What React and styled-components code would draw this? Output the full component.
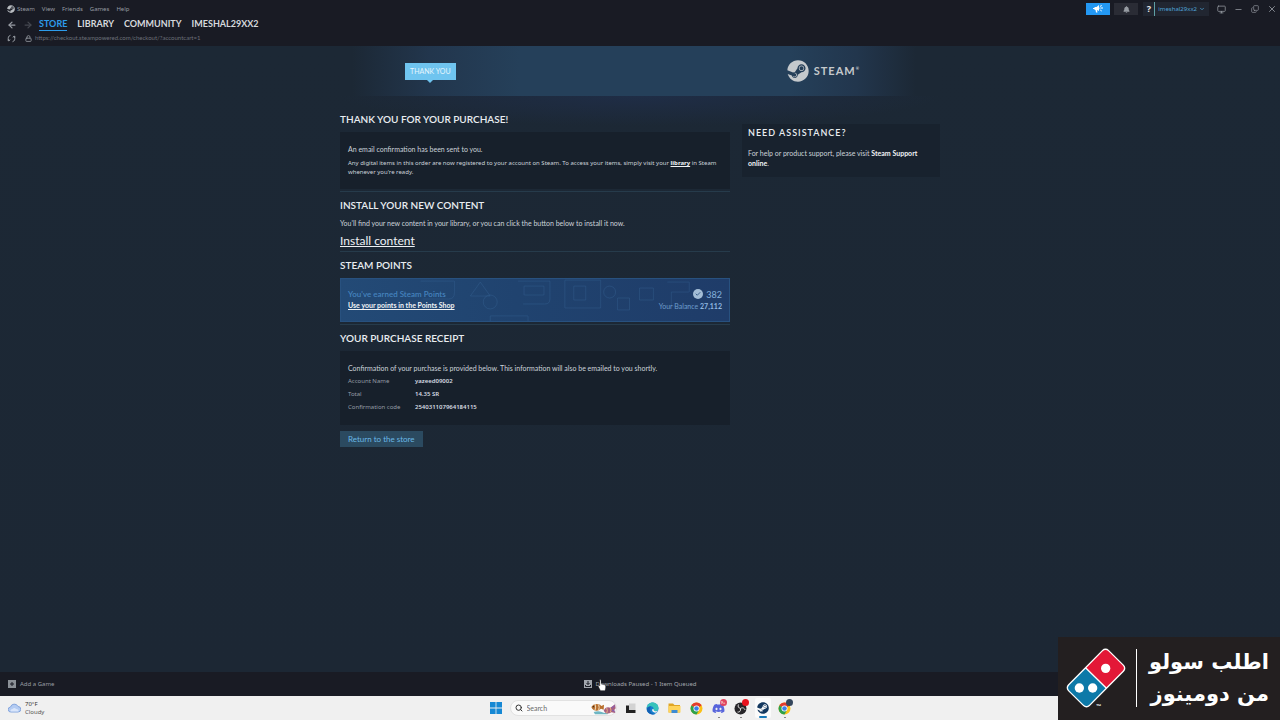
import React from "react";
import styled, { createGlobalStyle } from "styled-components";
import {
  ArrowLeft, ArrowRight, Lock, ChevronDown, Monitor, Minus, Copy, X, Search, Check,
} from "lucide-react";
import { FaSteam, FaDiscord, FaBell } from "react-icons/fa";

const compact = `"Noto Sans", "Open Sans", sans-serif`;

const Global = createGlobalStyle`
  * { box-sizing: border-box; }
  body { margin: 0; background: #1c2734; }
  button, input { font: inherit; }
  a { color: inherit; text-decoration: none; }
  h1, h2, p { margin: 0; }
`;

const Shell = styled.div`
  min-height: 100vh;
  display: flex;
  flex-direction: column;
  font-family: Lato, "Noto Sans", sans-serif;
  font-size: 7px;
  line-height: 10px;
  color: #ccd3da;
`;

const TopBar = styled.header`
  background: #191b24;
  padding: 0 3px 0 7px;
  height: 46px;
`;

const Bar = styled.div`
  display: flex;
  align-items: center;
  gap: ${(p) => p.$gap || 8}px;
  height: ${(p) => p.$h || 14}px;
`;

const PlainButton = styled.button`
  display: inline-flex;
  align-items: center;
  justify-content: center;
  gap: 2px;
  padding: 0;
  border: 0;
  background: none;
  color: ${(p) => p.$color || "#979ca3"};
  font-family: ${compact};
  font-size: 6px;
  cursor: pointer;
`;

const MenuNav = styled.nav`
  display: flex;
  align-items: center;
  gap: 7px;
  flex: 1;
`;

const ChipButton = styled(PlainButton)`
  width: 24px;
  height: 12px;
  background: ${(p) => p.$bg};
`;

const Account = styled.div`
  display: flex;
  align-items: center;
  height: 14px;
  margin: 0 4px 0 1px;
  background: #212631;
`;

const HelpButton = styled(PlainButton)`
  width: 12px;
  height: 14px;
  font-size: 9px;
  font-weight: 700;
  border-right: 1px solid #5f9fa5;
`;

const AccountButton = styled(PlainButton)`
  padding: 0 4px 0 3px;
`;

const WindowControls = styled.div`
  display: flex;
  align-items: center;
  gap: 8px;
`;

const NavLinks = styled.nav`
  display: flex;
  gap: 10px;
`;

const NavLink = styled.a`
  font-size: 9px;
  line-height: 12px;
  font-weight: 700;
  color: ${(p) => (p.$active ? "#2d9ceb" : "#d6d9dd")};
  border-bottom: 1px solid ${(p) => (p.$active ? "#2d9ceb" : "transparent")};
`;

const Address = styled.span`
  color: #6b7078;
  font-size: 6px;
`;

const Content = styled.div`
  flex: 1;
  background: linear-gradient(#1c2835, #1c2734);
`;

const Banner = styled.div`
  height: 50px;
  max-width: 600px;
  margin: 0 auto;
  display: flex;
  align-items: center;
  justify-content: space-between;
  padding: 0 81px 0 65px;
  background: linear-gradient(90deg, #1c2835 2%, #22364d 15%, #25405a 30%, #25405a 75%, #22364d 86%, #1c2835 96%);
`;

const StepTag = styled.h1`
  position: relative;
  padding: 3px 5px 4px;
  font-size: 7px;
  line-height: 10px;
  font-weight: 400;
  color: #e6f5fd;
  background: #6fc4ef;
  &::after {
    content: "";
    position: absolute;
    left: 50%;
    top: 100%;
    margin-left: -3px;
    border: 3px solid transparent;
    border-top-color: #6fc4ef;
    border-bottom: 0;
  }
`;

const Logo = styled.div`
  display: flex;
  align-items: center;
  gap: 5px;
  color: #c5c9cc;
  font-size: 11px;
  line-height: 16px;
  font-weight: 700;
  letter-spacing: 1px;
  sup { font-size: 4px; line-height: 4px; letter-spacing: 0; }
`;

const Columns = styled.div`
  max-width: 600px;
  margin: 0 auto;
  display: grid;
  grid-template-columns: minmax(0, 65fr) minmax(0, 33fr);
  column-gap: 12px;
  align-items: start;
  background: radial-gradient(300px 30px at 50% 0, #1f2d46, #1f2d4600);
`;

const Main = styled.main`
  display: flex;
  flex-direction: column;
  gap: 6px;
  padding: 16px 0 24px;
`;

const Section = styled.section`
  padding-bottom: ${(p) => (p.$last ? 0 : 2)}px;
  border-bottom: ${(p) => (p.$last ? "0" : "1px solid #263b4b")};
`;

const Heading = styled.h2`
  font-size: 10px;
  line-height: 14px;
  font-weight: 600;
  color: #e9edf1;
  margin-bottom: 6px;
`;

const Panel = styled.div`
  background: #17202b;
  padding: 12px 8px;
`;

const Note = styled.p`
  font-family: ${compact};
  font-size: 6px;
  line-height: 9px;
  margin-top: 5px;
`;

const InlineLink = styled.a`
  font-weight: 700;
  color: #f0f3f5;
  text-decoration: ${(p) => (p.$plain ? "none" : "underline")};
`;

const InstallLink = styled.a`
  display: inline-block;
  margin-top: 5px;
  font-size: 12px;
  line-height: 16px;
  color: #edf1f4;
  text-decoration: underline;
  vertical-align: top;
`;

const PointsCard = styled.div`
  position: relative;
  display: flex;
  justify-content: space-between;
  align-items: center;
  height: 44px;
  padding: 0 7px 1px;
  border: 1px solid #28517f;
  background: linear-gradient(90deg, #234a76, #20436f 45%, #1f3c69);
  color: #6c9bca;
  overflow: hidden;
`;

const Pattern = styled.svg`
  position: absolute;
  inset: 0;
  width: 100%;
  height: 100%;
`;

const PointsSide = styled.div`
  position: relative;
  display: flex;
  flex-direction: column;
  align-items: ${(p) => (p.$end ? "flex-end" : "flex-start")};
  gap: 1px;
  b { color: #8fb8e0; }
`;

const Earned = styled.p`
  font-size: 8px;
  line-height: 10px;
  font-weight: 600;
  color: #4583be;
`;

const Amount = styled.p`
  display: flex;
  align-items: center;
  gap: 3px;
  font-size: 9px;
  line-height: 11px;
  color: #85b1dc;
`;

const Coin = styled.span`
  display: grid;
  place-items: center;
  width: 10px;
  height: 10px;
  border-radius: 50%;
  background: #a3bdd6;
  color: #3d628c;
`;

const Receipt = styled.table`
  border-collapse: collapse;
  margin-top: 1px;
  font-family: ${compact};
  font-size: 6px;
  th, td { height: 13px; padding: 0; text-align: left; line-height: 10px; }
  th { width: 67px; font-weight: 400; color: #959da7; }
  td { color: #d6dce2; font-weight: 600; }
`;

const StoreButton = styled.button`
  align-self: flex-start;
  height: 16px;
  padding: 0 8px;
  border: 0;
  background: #2b4a60;
  color: #6ab9e6;
  font-size: 8px;
  line-height: 10px;
  cursor: pointer;
`;

const Aside = styled.aside`
  margin-top: 28px;
  padding: 2px 6px 9px;
  background: #18222e;
  ${Heading} {
    margin-bottom: 8px;
    font-size: 9px;
    letter-spacing: 1px;
  }
`;

const StatusBar = styled.footer`
  display: grid;
  grid-template-columns: 1fr auto 1fr;
  align-items: center;
  height: 24px;
  padding: 0 8px 1px;
  background: #191b24;
`;

const StatusButton = styled(PlainButton)`
  gap: 4px;
  justify-self: start;
`;

const Taskbar = styled.nav`
  display: grid;
  grid-template-columns: 1fr auto 1fr;
  align-items: center;
  height: 24px;
  padding: 0 8px;
  background: #f0f0f0;
`;

const Weather = styled.div`
  display: flex;
  align-items: center;
  gap: 4px;
  color: #555;
  font-family: ${compact};
  font-size: 6px;
  line-height: 8px;
  p:first-child { color: #333; }
`;

const Apps = styled.div`
  display: flex;
  align-items: center;
  gap: 6px;
`;

const SearchBox = styled.label`
  display: flex;
  align-items: center;
  gap: 4px;
  width: 107px;
  height: 16px;
  padding: 0 0 0 4px;
  border: 1px solid #e2e2e2;
  border-radius: 8px;
  background: #fafafa;
  color: #333;
  input {
    flex: 1;
    min-width: 0;
    padding: 0;
    border: 0;
    outline: 0;
    background: none;
    font-size: 7px;
  }
  input::placeholder { color: #6a6a6a; opacity: 1; }
`;

const AppButton = styled.button`
  position: relative;
  display: grid;
  place-items: center;
  width: 16px;
  height: 20px;
  padding: 0;
  border: 0;
  border-radius: 2px;
  background: ${(p) => (p.$active ? "#fbfbfb" : "none")};
  &::after {
    content: "";
    position: absolute;
    bottom: 0;
    width: ${(p) => (p.$active ? 8 : 2)}px;
    height: ${(p) => (p.$active ? 2 : p.$open ? 1 : 0)}px;
    border-radius: 1px;
    background: ${(p) => (p.$active ? "#1778b8" : "#777")};
  }
`;

const Badge = styled.span`
  position: absolute;
  top: 1px;
  right: 0;
  width: 7px;
  height: 7px;
  border-radius: 50%;
  background: ${(p) => p.$bg};
  color: #fff;
  font-size: 4px;
  line-height: 7px;
`;

const Ad = styled.aside`
  position: fixed;
  right: 0;
  bottom: 0;
  display: flex;
  align-items: center;
  height: 83px;
  width: 222px;
  padding: 0 11px 2px 8px;
  background: #231f20;
  color: #fff;
  svg { flex: none; }
`;

const Divider = styled.span`
  width: 1px;
  height: 58px;
  margin-left: 10px;
  background: #fff;
`;

const AdText = styled.p`
  flex: 1;
  direction: rtl;
  font-family: "DejaVu Sans", sans-serif;
  font-weight: 700;
  font-size: 21px;
  line-height: 32px;
  white-space: nowrap;
`;

const Pointer = styled.svg`
  position: fixed;
  left: calc(50% - 42px);
  bottom: 29px;
`;

const Refresh = () => (
  <svg width="9" height="9" viewBox="0 0 18 18" fill="none" stroke="currentColor" strokeWidth="2">
    <path d="M7 2.500C3 3.500 1 8 3.500 13M1 12l3 2 2-3M11 15.500c4-1 6-5.500 3.500-10.500M17 6l-3-2-2 3" />
  </svg>
);

const Horn = () => (
  <svg width="10" height="8" viewBox="0 0 20 16" fill="currentColor">
    <path d="M12 0v12L8 10l1 5H6L5 10H3V8H0V6h3V4h4ZM13 4q3 2 0 5ZM15 5h5v2h-5ZM14 2l3-2 1 1-3 3ZM14 10l3 3 1-1-3-3Z" />
  </svg>
);

const Chrome = () => (
  <svg width="13" height="13" viewBox="0 0 24 24">
    <circle cx="12" cy="12" r="11" fill="#fbc116" />
    <path d="M12 12 2.500 6.500A11 11 0 0 1 21.500 6.500Z" fill="#e33b2e" />
    <path d="M12 12 2.500 6.500A11 11 0 0 0 12 23l4-7Z" fill="#2da14c" />
    <circle cx="12" cy="12" r="5.500" fill="#fff" />
    <circle cx="12" cy="12" r="4.200" fill="#3b7fe8" />
  </svg>
);

const Edge = () => (
  <svg width="13" height="13" viewBox="0 0 24 24">
    <circle cx="12" cy="12" r="11" fill="#1680cf" />
    <path d="M1 12C2 5 6 1 12 1c7 0 11 5 11 10 0 4-3 6-6 6-4 0-3-2-3-4 0-3-2-5-5-5-4 0-7 2-8 4Z" fill="#38c3bb" />
    <path d="M8 12c-2 6 3 10 9 10-7 3-15-1-15.500-8C2 10 6 8 9 8c-1 1-1 2-1 4Z" fill="#1260b4" />
    <path d="M14 13c0 3 2 4.500 5 4l3-1.500-2 3.500c-5 2-9-1-9-5Z" fill="#f0f0f0" />
  </svg>
);

const Folder = () => (
  <svg width="13" height="12" viewBox="0 0 26 24">
    <path d="M1 3h9l3 3h11v15H1Z" fill="#dfa525" />
    <path d="M1 8h24v13H1Z" fill="#ffd45b" />
    <path d="M7 16h12v6H7Z" fill="#3c8bd4" />
  </svg>
);

const Windows = () => (
  <svg width="12" height="12" viewBox="0 0 12 12" fill="#1688d4">
    <path d="M0 0h5.600v5.600H0ZM6.400 0H12v5.600H6.400ZM0 6.400h5.600V12H0ZM6.400 6.400H12V12H6.400Z" />
  </svg>
);

const TaskView = () => (
  <svg width="11" height="11" viewBox="0 0 22 22">
    <path d="M8 1h13v14H8Z" fill="#d2d2d2" />
    <path d="M2 5h6v9h13v6H2Z" fill="#222" />
  </svg>
);

const Obs = () => (
  <svg width="13" height="13" viewBox="0 0 26 26">
    <circle cx="13" cy="13" r="12" fill="#262529" />
    <g fill="none" stroke="#d8d8d8" strokeWidth="2">
      <path d="M13 13c-4-1-6-4-4-8M13 13c4-3 8-1 9 3M13 13c1 5-2 8-6 7" />
    </g>
  </svg>
);

const Fishes = () => (
  <svg width="25" height="13" viewBox="0 0 75 39">
    <path d="M8 30q14-5 24 0t18 2v5H12Z" fill="#6eb6c3" />
    <path d="M1 15Q8 3 22 7q6 1 9 5l8-4-1 15-8-3Q20 30 8 24 3 21 1 15Z" fill="#b9702f" />
    <path d="M12 6q4 9 0 19M23 8q3 8 0 17" stroke="#f3e0c0" strokeWidth="3" fill="none" />
    <circle cx="7" cy="14" r="2" fill="#222" />
    <path d="M38 26Q44 12 58 17l14-10 2 12-4 5 3 9-12-2Q46 40 38 26Z" fill="#a8607f" />
    <path d="M47 18q4 8 0 16M58 17q4 8 0 14" stroke="#eab27c" strokeWidth="3" fill="none" />
    <path d="M62 18l9-7M63 24l8 4" stroke="#7e5fc0" strokeWidth="3" />
  </svg>
);

const Cloud = () => (
  <svg width="13" height="10" viewBox="0 0 26 20">
    <path d="M6 18a5 5 0 0 1-1-10A8 8 0 0 1 20 7a5.500 5.500 0 0 1 0 11Z" fill="#b3cbf2" stroke="#84a5dd" strokeWidth="2" />
    <path d="M5 17a4 4 0 0 1 4-5q4-4 7 0 6 0 5 5Z" fill="#dae6fb" />
  </svg>
);

const Domino = () => (
  <svg width="60" height="60" viewBox="50 55 180 180" aria-label="Domino's">
    <g transform="translate(140 145) rotate(-45.300)">
      <rect x="-87" y="-46" width="174" height="92" rx="14" fill="#fff" />
      <path d="M-2-42V42H-71Q-83 42-83 30V-30Q-83-42-71-42Z" fill="#0d79a8" />
      <path d="M2-42V42H71Q83 42 83 30V-30Q83-42 71-42Z" fill="#e31837" />
    </g>
    <circle cx="169" cy="116" r="14" fill="#fff" />
    <circle cx="90" cy="175" r="14" fill="#fff" />
    <circle cx="130" cy="175" r="14" fill="#fff" />
    <text x="148" y="234" fontSize="16" fontWeight="700" fontFamily="Liberation Sans" fill="#fff" textAnchor="middle">™</text>
  </svg>
);

const receiptRows = [
  ["Account Name", "yazeed09002"],
  ["Total", "14.35 SR"],
  ["Confirmation code", "254031107964184115"],
];

export default function App() {
  return (
    <>
      <Global />
      <Shell>
        <TopBar>
          <Bar $h={18}>
            <MenuNav aria-label="Application">
              <PlainButton><FaSteam size={8} color="#b8bcc0" />Steam</PlainButton>
              {["View", "Friends", "Games", "Help"].map((m) => <PlainButton key={m}>{m}</PlainButton>)}
            </MenuNav>
            <Bar $gap={4}>
              <ChipButton $bg="#2398f3" $color="#fff" aria-label="What's new"><Horn /></ChipButton>
              <ChipButton $bg="#2a2c35" aria-label="Notifications"><FaBell size={7} /></ChipButton>
              <Account>
                <HelpButton $color="#e8e8e8" aria-label="Help">?</HelpButton>
                <AccountButton $color="#4fa3d8">imeshal29xx2<ChevronDown size={6} strokeWidth={3} /></AccountButton>
              </Account>
              <WindowControls>
                <PlainButton aria-label="Big Picture"><Monitor size={9} /></PlainButton>
                <PlainButton aria-label="Minimize"><Minus size={9} /></PlainButton>
                <PlainButton aria-label="Restore"><Copy size={8} style={{ transform: "scaleY(-1)" }} /></PlainButton>
                <PlainButton aria-label="Close"><X size={10} /></PlainButton>
              </WindowControls>
            </Bar>
          </Bar>
          <Bar $gap={6} $h={13}>
            <PlainButton aria-label="Back"><ArrowLeft size={10} strokeWidth={3} /></PlainButton>
            <PlainButton $color="#454850" aria-label="Forward"><ArrowRight size={10} strokeWidth={3} /></PlainButton>
            <NavLinks>
              <NavLink href="#store" $active>STORE</NavLink>
              <NavLink href="#library">LIBRARY</NavLink>
              <NavLink href="#community">COMMUNITY</NavLink>
              <NavLink href="#profile">IMESHAL29XX2</NavLink>
            </NavLinks>
          </Bar>
          <Bar $gap={9}>
            <PlainButton aria-label="Reload"><Refresh /></PlainButton>
            <Bar $gap={3}>
              <Lock size={7} color="#8b9097" strokeWidth={3} />
              <Address>https://checkout.steampowered.com/checkout/?accountcart=1</Address>
            </Bar>
          </Bar>
        </TopBar>

        <Content>
          <Banner>
            <StepTag>THANK YOU</StepTag>
            <Logo><FaSteam size={22} /><span>STEAM<sup>®</sup></span></Logo>
          </Banner>
          <Columns>
            <Main>
              <Section>
                <Heading>THANK YOU FOR YOUR PURCHASE!</Heading>
                <Panel>
                  <p>An email confirmation has been sent to you.</p>
                  <Note>
                    Any digital items in this order are now registered to your account on Steam. To access your items, simply visit your <InlineLink href="#library">library</InlineLink> in Steam whenever you're ready.
                  </Note>
                </Panel>
              </Section>
              <Section>
                <Heading>INSTALL YOUR NEW CONTENT</Heading>
                <p>You'll find your new content in your library, or you can click the button below to install it now.</p>
                <InstallLink href="#install">Install content</InstallLink>
              </Section>
              <Section>
                <Heading>STEAM POINTS</Heading>
                <PointsCard>
                  <Pattern viewBox="0 0 390 44" preserveAspectRatio="xMidYMid slice" fill="none" stroke="#3a679a" strokeOpacity="0.35" aria-hidden="true">
                    <path d="M80 3h34v12q0 6-6 6H82M140 4l10 14h-20ZM178 3h32v18q0 5-5 5h-22M184 8h20v9h-20ZM225 2h36v28h-36ZM234 8h12v14h-12ZM150 44v-6h38v6M278 32v-12h12v12ZM300 10h14v12h-14ZM328 4h22v10h-18v14h20" />
                    <circle cx="150" cy="24" r="7" /><circle cx="270" cy="14" r="6" />
                  </Pattern>
                  <PointsSide>
                    <Earned>You've earned Steam Points</Earned>
                    <InlineLink href="#points">Use your points in the Points Shop</InlineLink>
                  </PointsSide>
                  <PointsSide $end>
                    <Amount><Coin><Check size={6} strokeWidth={4} /></Coin>382</Amount>
                    <p>Your Balance <b>27,112</b></p>
                  </PointsSide>
                </PointsCard>
              </Section>
              <Section $last>
                <Heading>YOUR PURCHASE RECEIPT</Heading>
                <Panel>
                  <p>Confirmation of your purchase is provided below. This information will also be emailed to you shortly.</p>
                  <Receipt>
                    <tbody>
                      {receiptRows.map(([k, v]) => <tr key={k}><th scope="row">{k}</th><td>{v}</td></tr>)}
                    </tbody>
                  </Receipt>
                </Panel>
              </Section>
              <StoreButton>Return to the store</StoreButton>
            </Main>
            <Aside>
              <Heading>NEED ASSISTANCE?</Heading>
              <p>For help or product support, please visit <InlineLink $plain href="#support">Steam Support online</InlineLink>.</p>
            </Aside>
          </Columns>
        </Content>

        <StatusBar>
          <StatusButton>
            <svg width="8" height="8" viewBox="0 0 8 8"><path fill="#8b9097" d="M0 0h8v8H0Z" /><path stroke="#191b24" d="M4 2v4M2 4h4" /></svg>
            Add a Game
          </StatusButton>
          <StatusButton $color="#a2a6ad">
            <svg width="8" height="8" viewBox="0 0 16 16"><path fill="#a2a6ad" d="M0 0h16v16H0Z" /><path fill="none" stroke="#191b24" strokeWidth="2" d="M8 2v7M5 6l3 3 3-3M3 10v3h10v-3" /></svg>
            Downloads Paused - 1 Item Queued
          </StatusButton>
        </StatusBar>

        <Taskbar aria-label="Taskbar">
          <Weather><Cloud /><div><p>70°F</p><p>Cloudy</p></div></Weather>
          <Apps>
            <AppButton aria-label="Start"><Windows /></AppButton>
            <SearchBox>
              <Search size={8} strokeWidth={3} />
              <input type="text" placeholder="Search" aria-label="Search" />
              <Fishes />
            </SearchBox>
            <AppButton aria-label="Task view"><TaskView /></AppButton>
            <AppButton aria-label="Edge"><Edge /></AppButton>
            <AppButton aria-label="Files"><Folder /></AppButton>
            <AppButton aria-label="Chrome"><Chrome /></AppButton>
            <AppButton $open aria-label="Discord"><FaDiscord size={13} color="#5865dc" /><Badge $bg="#e0455f">9+</Badge></AppButton>
            <AppButton $open aria-label="OBS"><Obs /><Badge $bg="#e8131f" /></AppButton>
            <AppButton $active aria-label="Steam"><FaSteam size={12} color="#14385f" /></AppButton>
            <AppButton $open aria-label="Chrome profile"><Chrome /><Badge $bg="#34465c" /></AppButton>
          </Apps>
        </Taskbar>
      </Shell>

      <Pointer width="8" height="12" viewBox="0 0 16 24" aria-hidden="true">
        <path d="M4 1q2 0 2 3v6l7 2q3 1 2 5l-1 6H5L1 15q0-3 3-1V4Q3 1 4 1Z" fill="#fff" stroke="#555" strokeWidth="0.500" />
      </Pointer>
      <Ad>
        <Domino />
        <Divider />
        <AdText>اطلب سولو<br />من دومينوز</AdText>
      </Ad>
    </>
  );
}
